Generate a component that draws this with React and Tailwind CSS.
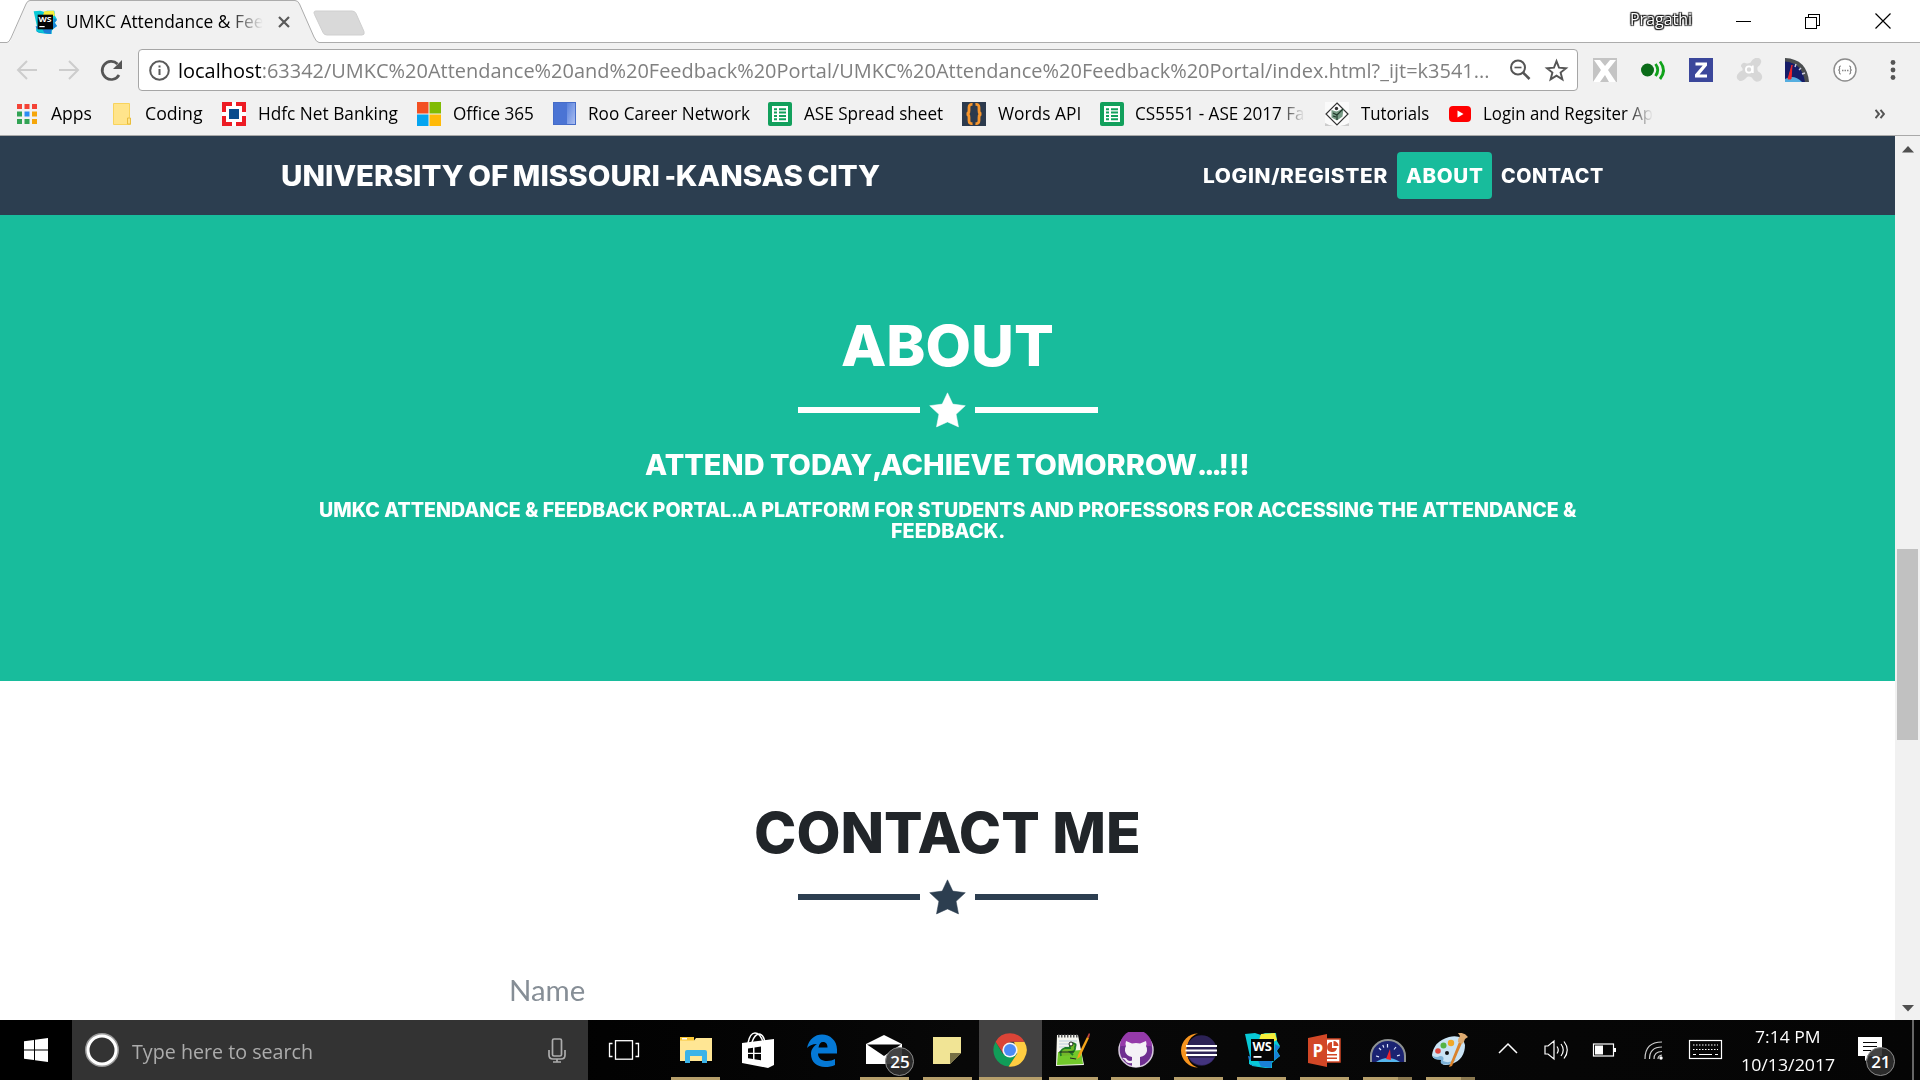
import React, { useLayoutEffect, useRef } from "react";

/* Single line of text stretched horizontally to fill the width of its box. */
function Fit({ className = "", inner = "", children }) {
  const box = useRef(null);
  const text = useRef(null);
  useLayoutEffect(() => {
    const natural = text.current.offsetWidth;
    if (natural) text.current.style.transform = `scaleX(${box.current.clientWidth / natural})`;
  }, []);
  return (
    <span ref={box} className={`flex shrink-0 items-center whitespace-nowrap ${className}`}>
      <span ref={text} className={`block w-max shrink-0 origin-left ${inner}`}>{children}</span>
    </span>
  );
}

function WebStorm({ className }) {
  return (
    <svg viewBox="0 0 36 36" className={className}>
      <path d="M1 2l10-1 6 2 4-2 11 0 1 8 3 5-3 5 3 5-6 5-2 2 0 6-20-3z" fill="#08c9d6" />
      <path d="M17 2l14-1 2 7-4 2-14-2z" fill="#f5ee3a" />
      <path d="M31 12l5 3-4 4 4 5-6 4zM4 24l24 5-1 7-21-3z" fill="#1a7fd6" />
      <path d="M5 28l8-2 4 9-12-3z" fill="#08c9d6" />
      <rect x="7" y="7" width="23" height="22" fill="#050505" />
      <text x="8.4" y="18.6" fontFamily="Open Sans" fontWeight="700" fontSize="11.5" textLength="19.5" lengthAdjust="spacingAndGlyphs" fill="#fff">WS</text>
      <rect x="9.5" y="24" width="8" height="1.8" fill="#fff" />
    </svg>
  );
}

function Sheets() {
  return (
    <svg viewBox="0 0 24 24" className="h-6 w-6">
      <rect width="24" height="24" rx="2" fill="#12a05c" />
      <path d="M4 4h16v16H4z" fill="#fff" />
      <path d="M6 6.2h3v2H6zM11 6.2h7v2h-7zM6 9.6h3v2H6zM11 9.6h7v2h-7zM6 13h3v2H6zM11 13h7v2h-7zM6 16.3h3v2H6zM11 16.3h7v2h-7z" fill="#12a05c" />
    </svg>
  );
}

const gauge = (
  <>
    <path d="M1 24V18a18 17 0 0 1 36 0v6z" fill="#8e9292" />
    <path d="M3 24V18a16 15 0 0 1 32 0v6z" fill="#1b2372" />
    <path d="M7 24q12-8 24 0z" fill="#56b5ec" />
    <path d="M7 18l3 .8M10 10l2 2M18.500 6v3.500M27 9l-2 2.500M31 17l-3 .8M13.800 7l1 2.600" stroke="#dfe6ff" strokeWidth="1.200" />
    <path d="M17 21l4-10 1 11z" fill="#f0252c" />
  </>
);

function TitleBar() {
  return (
    <div className="flex h-[43px] shrink-0 bg-white">
      <div className="relative flex h-[43px] w-[380px]">
        <svg className="absolute left-0 top-0" width="380" height="43" viewBox="0 0 380 43">
          <path d="M8 42.500C11 42 11.500 38 13 35L26 4Q27.500.500 30 .500H295Q298 .500 299.500 4L314 37Q316 42.500 319 42.500V43H8z" fill="#f1f1f1" />
          <path d="M0 42.500H7Q9 42.500 11 38L26 4Q27.500.500 30 .500H295Q298 .500 299.500 4L314 37Q316.500 42.500 319 42.500H380" fill="none" stroke="#acacac" />
          <path d="M316 11h36q3 0 4 2.500l8 18q1 3.500-2 3.500h-35q-3 0-4-2.500l-8.500-18Q313 11 316 11z" fill="#d9d9d9" stroke="#cfcfcf" />
        </svg>
        <div className="relative flex h-[43px] w-full items-center">
          <WebStorm className="ml-[33px] h-6 w-6" />
          <Fit className="ml-[9px] w-[197px] text-[18px] [mask-image:linear-gradient(to_right,black_82%,transparent)]" inner="text-black">UMKC Attendance &amp; Fee</Fit>
          <svg className="ml-[15px]" width="12" height="12" viewBox="0 0 12 12"><path d="M1 1l10 10M11 1L1 11" stroke="#5a5a5a" strokeWidth="2.200" /></svg>
        </div>
      </div>
      <div className="flex flex-1 items-center border-b border-[#acacac]">
        <Fit className="ml-[1250px] -mt-[5px] w-[62px] text-[17px] text-white [text-shadow:0_0_2px_#000,1px_1px_1px_#222,-1px_-1px_1px_#222,1px_-1px_1px_#222,-1px_1px_1px_#222]">Pragathi</Fit>
        <svg className="ml-[44px] -mt-[1px]" width="155" height="18" viewBox="0 0 155 18" fill="none" stroke="#000" shapeRendering="crispEdges">
          <path d="M0 9.500H15" />
          <path d="M69.500 5.500h11v11h-11zM72.500 5V2.500h11v11H81" />
          <path d="M139.500 1.500l15 15M154.500 1.500l-15 15" shapeRendering="auto" strokeWidth="1.200" />
        </svg>
      </div>
    </div>
  );
}

function Toolbar() {
  return (
    <div className="flex h-[49px] shrink-0 items-start pt-[6px]">
      <svg className="mt-[1px]" width="138" height="42" viewBox="0 0 138 42" fill="none">
        <path d="M37 20H18.500M27 11l-9 9 9 9M59 20h19M69 11l9 9-9 9" stroke="#cdcdcd" strokeWidth="2" />
        <path d="M119 25a9 9 0 1 1-1.500-11" stroke="#555" strokeWidth="2.700" />
        <path d="M122 10v9h-9z" fill="#555" />
      </svg>
      <div className="flex h-[42px] w-[1440px] items-center rounded border border-[#a6a6a6] bg-white">
        <svg className="ml-[10px]" width="21" height="21" viewBox="0 0 21 21"><circle cx="10.500" cy="10.500" r="9.300" fill="none" stroke="#5a5a5a" strokeWidth="2" /><path d="M9.500 9h2v6h-2zM9.500 5.500h2v2h-2z" fill="#5a5a5a" /></svg>
        <Fit className="ml-[8px] w-[1311px] text-[20.500px] text-[#808080]"><span className="text-black">localhost</span>:63342/UMKC%20Attendance%20and%20Feedback%20Portal/UMKC%20Attendance%20Feedback%20Portal/index.html?_ijt=k3541...</Fit>
        <svg className="ml-[21px]" width="60" height="24" viewBox="0 0 60 24" fill="none" stroke="#555">
          <circle cx="8" cy="9.500" r="7" strokeWidth="2" /><path d="M4.500 9.500h7" strokeWidth="1.600" /><path d="M13 14.500l6.500 6.500" strokeWidth="2.600" />
          <path d="M46.500 3.200l2.500 6.500 7 .500-5.400 4.400 1.800 6.800-5.900-3.800-5.900 3.800 1.800-6.800L37 10.200l7-.500z" strokeWidth="1.900" />
        </svg>
      </div>
      <svg className="ml-[15px] mt-[9px]" width="312" height="24" viewBox="0 0 312 24">
        <rect width="24" height="24" fill="#c4c4c4" /><path d="M1 2h6l5 6 5-6h6l-8 10 8 12h-7l-4-7-5 7H0l8-12z" fill="#fff" />
        <circle cx="54.500" cy="12" r="6.500" fill="#0a6b18" /><path d="M62.500 6q4.500 6 0 12M67 3.500q7 9 0 17.500" stroke="#0fa31a" strokeWidth="2.800" fill="none" />
        <rect x="96" width="24" height="24" fill="#3b479b" /><path d="M102.500 4.500h11.500v3l-7.500 9H114v3h-12v-3l7.700-9h-7.200z" fill="#fff" />
        <path d="M151 5.500q4 1.500 7-.500 2-4 5.500-4.500 4 0 4 3.500-.500 3-3.500 4.500-1 3 .500 5.500 3.500 1.500 4 5-.500 4-4.500 4-3-.500-4.500-4-4-2-6-.500-4 4.500-7 3.500-3-2-1.500-5 2-3 5-4 1-2-.500-4-2-1.500 1.500-3.500z" fill="#d7d7d7" stroke="#d7d7d7" strokeWidth="1.500" />
        <circle cx="156" cy="11.500" r="3.100" stroke="#fff" strokeWidth="1.800" fill="none" /><path d="M159.800 7.500v7.500" stroke="#fff" strokeWidth="1.800" />
        <path d="M192 0q22 1 24 24h-24z" fill="#4b4e50" /><path d="M192 3.500q17 1 20 20.500h-20z" fill="#161c68" /><path d="M192 21q9-5 17 3h-17z" fill="#55aee0" /><path d="M199 7l-4 14 3 0z" stroke="#f02528" fill="#f02528" /><path d="M203 6l-1 3M208 10l-2 2M212 15l-3 1" stroke="#ccd" strokeWidth="1.400" />
        <circle cx="252" cy="12" r="11" fill="#fff" stroke="#8c8c8c" strokeWidth="1.400" />
        <path d="M248 8q-2 0-1.500 2t-1.500 2q2 0 1.500 2t1.500 2M256 8q2 0 1.500 2t1.500 2q-2 0-1.500 2t-1.500 2" fill="none" stroke="#888" strokeWidth="1.200" /><path d="M249 12.500h1.500M251.500 12.500h1.500M254 12.500h1.500" stroke="#888" strokeWidth="1.400" />
        <g fill="#555"><circle cx="300" cy="4.500" r="2.400" /><circle cx="300" cy="12" r="2.400" /><circle cx="300" cy="19.500" r="2.400" /></g>
      </svg>
    </div>
  );
}

function Bookmarks() {
  const t = "text-[18px]";
  return (
    <div className="flex h-[44px] shrink-0 items-center border-b border-[#a9a9a9] text-black">
      <svg className="ml-[17px]" width="20" height="20" viewBox="0 0 20 20">
        <path d="M0 0h5v5H0zM7.500 0h5v5h-5zM15 0h5v5h-5z" fill="#f44336" /><path d="M0 7.500h5v5H0zM0 15h5v5H0zM7.500 15h5v5h-5z" fill="#31a354" /><path d="M7.500 7.500h5v5h-5z" fill="#2a8cf5" /><path d="M15 7.500h5v5h-5zM15 15h5v5h-5z" fill="#f5a60a" />
      </svg>
      <Fit className={`ml-[14px] w-[41px] ${t}`}>Apps</Fit>
      <svg className="ml-[21px]" width="18" height="22" viewBox="0 0 18 22"><path d="M.500.500h16v14l1 1v6H.500z" fill="#ffe48b" stroke="#f8d35c" /><path d="M14.500 21v-6h3v6z" fill="#ffe48b" stroke="#e8bd3e" /></svg>
      <Fit className={`ml-[14px] w-[58px] ${t}`}>Coding</Fit>
      <svg className="ml-[19px]" width="24" height="24" viewBox="0 0 24 24"><rect width="24" height="24" fill="#ed1c24" /><path d="M4 4h16v16H4zM10 0h4v24h-4zM0 10h24v4H0z" fill="#fff" /><rect x="7" y="7" width="10" height="10" fill="#084c8d" /></svg>
      <Fit className={`ml-[12px] w-[140px] ${t}`}>Hdfc Net Banking</Fit>
      <svg className="ml-[19px]" width="24" height="24" viewBox="0 0 24 24"><path d="M0 0h11.500v11.500H0z" fill="#f35022" /><path d="M12.500 0H24v11.500H12.500z" fill="#80bb03" /><path d="M0 12.500h11.500V24H0z" fill="#05a5f0" /><path d="M12.500 12.500H24V24H12.500z" fill="#ffba08" /></svg>
      <Fit className={`ml-[12px] w-[81px] ${t}`}>Office 365</Fit>
      <div className="ml-[19px] flex h-[23px] w-[23px] justify-end border border-[#456cc8] bg-[#4b74d4]"><div className="h-full w-[8px] bg-linear-to-br from-[#5a82dc] to-[#aabdf0]" /></div>
      <Fit className={`ml-[12px] w-[162px] ${t}`}>Roo Career Network</Fit>
      <div className="ml-[18px]"><Sheets /></div>
      <Fit className={`ml-[12px] w-[139px] ${t}`}>ASE Spread sheet</Fit>
      <svg className="ml-[19px]" width="24" height="24" viewBox="0 0 24 24"><rect width="24" height="24" fill="#2c3a4d" /><path d="M10.500 2.500Q7 2 7 5.500v3Q7 12 4.500 12 7 12 7 15.500v3q0 3.500 3.500 3M13.500 2.500q3.500-.500 3.500 3v3q0 3.500 2.500 3.500Q17 12 17 15.500v3q0 3.500-3.500 3" fill="none" stroke="#f7962d" strokeWidth="2.800" /></svg>
      <Fit className={`ml-[12px] w-[83px] ${t}`}>Words API</Fit>
      <div className="ml-[19px]"><Sheets /></div>
      <Fit className={`ml-[11px] w-[170px] ${t} [mask-image:linear-gradient(to_right,black_84%,transparent)]`}>CS5551 - ASE 2017 Fa</Fit>
      <svg className="ml-[20px]" width="24" height="24" viewBox="0 0 24 24"><rect width="24" height="24" fill="#fafafa" /><path d="M12 1l11 11-11 11L1 12z" fill="#fff" stroke="#333" strokeWidth="1.200" /><path d="M6.500 8l5 1.500 7-3-1 8-5.500 4-5.500-3z" fill="#789c86" /><path d="M8 11l4 2 6-6M12 13v5M8 14l3 1" stroke="#20382b" strokeWidth="1.200" fill="none" /><circle cx="11.500" cy="6.500" r="1.700" fill="#333" /><path d="M0 21q5 3 9 3H0zM24 21q-5 3-9 3h9z" fill="#ccc" /></svg>
      <Fit className={`ml-[12px] w-[68px] ${t}`}>Tutorials</Fit>
      <svg className="ml-[20px]" width="22" height="18" viewBox="0 0 22 18"><rect y="1" width="22" height="16" rx="4" fill="#f00" /><path d="M8.500 5.500l6 3.500-6 3.500z" fill="#fff" /></svg>
      <Fit className={`ml-[12px] w-[170px] ${t} [mask-image:linear-gradient(to_right,black_84%,transparent)]`}>Login and Regsiter Ap</Fit>
      <svg className="ml-[222px]" width="10" height="10" viewBox="0 0 10 10"><path d="M.500.800L4 5 .500 9.200M5.500.800L9 5 5.500 9.200" fill="none" stroke="#555" strokeWidth="2" /></svg>
    </div>
  );
}

function StarDivider({ line, fill }) {
  return (
    <div className="flex h-[60px] items-center justify-center">
      <div className={`h-[6px] w-[122px] ${line}`} />
      <svg className="mx-[9px]" width="37" height="36" viewBox="0 0 37 36"><path d="M18.500.800l5.300 11.300 12.500 1.600-9.200 8.600 2.400 12.600-11-5-11 5 2.400-12.600L.700 13.700l12.500-1.600z" fill={fill} stroke={fill} strokeWidth=".5" strokeLinejoin="round" /></svg>
      <div className={`h-[6px] w-[123px] ${line}`} />
    </div>
  );
}

function Page() {
  return (
    <div className="flex min-h-0 flex-1 bg-white">
      <div className="flex w-[1895px] flex-col overflow-hidden font-['Inter',sans-serif] font-extrabold">
        <nav className="flex h-[79px] shrink-0 items-center bg-[#2c3e50] text-white">
          <Fit className="ml-[281px] w-[599px] pt-[2px] text-[28.500px]" inner="[word-spacing:-2px]">UNIVERSITY OF MISSOURI <span className="-mr-[1px] inline-block w-[12px] origin-left scale-x-80">-</span>KANSAS CITY</Fit>
          <Fit className="ml-[323px] w-[185px] pt-[2px] text-[19.500px]" inner="tracking-[.6px]">LOGIN/REGISTER</Fit>
          <div className="ml-[9px] flex h-[47px] w-[95px] items-center justify-center rounded bg-[#18bc9c]"><Fit className="w-[77px] pt-[2px] text-[19.500px]" inner="tracking-[.6px]">ABOUT</Fit></div>
          <Fit className="ml-[9px] w-[103px] pt-[2px] text-[19.500px]" inner="tracking-[.6px]">CONTACT</Fit>
        </nav>
        <section className="flex h-[466px] shrink-0 flex-col items-center bg-[#18bc9c] pt-[97px] text-white">
          <Fit className="h-[68px] w-[213px] text-[57px]">ABOUT</Fit>
          <StarDivider line="bg-white" fill="#fff" />
          <Fit className="h-[49px] w-[605px] text-[29px]" inner="[word-spacing:-1px]">ATTEND TODAY<span className="tracking-[-2px]">,</span>ACHIEVE TOMORROW<span className="tracking-[-3px]">...</span>!!!</Fit>
          <Fit className="mt-[11px] h-[21px] w-[1257px] text-[19.500px]">UMKC ATTENDANCE &amp; FEEDBACK PORTAL<span className="tracking-[-1.500px]">..</span>A PLATFORM FOR STUDENTS AND PROFESSORS FOR ACCESSING THE ATTENDANCE &amp;</Fit>
          <Fit className="h-[21px] w-[114px] text-[19.500px]">FEEDBACK.</Fit>
        </section>
        <section className="flex flex-col items-center pt-[118px]">
          <Fit className="h-[68px] w-[387px] text-[57px] text-[#212529]">CONTACT ME</Fit>
          <StarDivider line="bg-[#2c3e50]" fill="#2c3e50" />
          <div className="mt-[43px] flex w-[877px]">
            <Fit className="h-[40px] w-[76px] font-['Lato'] text-[29px] font-normal text-[#868e96]">Name</Fit>
          </div>
        </section>
      </div>
      <div className="flex w-[25px] flex-col items-center bg-[#f1f1f1]">
        <svg className="mt-[10px]" width="12" height="7" viewBox="0 0 12 7"><path d="M6 0l6 6.500H0z" fill="#505050" /></svg>
        <div className="mt-[396px] h-[191px] w-[21px] bg-[#c1c1c1]" />
        <svg className="mt-[265px]" width="12" height="7" viewBox="0 0 12 7"><path d="M6 6.500L12 0H0z" fill="#505050" /></svg>
      </div>
    </div>
  );
}

function Task({ open, active, split, children }) {
  return (
    <div className={`flex h-[60px] w-[62.900px] shrink-0 flex-col items-center ${active ? "bg-[#434242]" : ""}`}>
      <div className="flex h-[57px] items-center pt-[3px]">{children}</div>
      {open && (
        <div className={`flex h-[3px] justify-end bg-[#b69f6b] ${active ? "w-full" : "w-[49px]"}`}>
          {split && <div className="h-full w-[14px] bg-[#8a7850]" />}
        </div>
      )}
    </div>
  );
}

function Badge({ children }) {
  return <div className="absolute flex h-[29px] w-[29px] items-center justify-center rounded-full border border-[#8b8b8b] bg-[#303030]/90 text-[17px] font-semibold text-white">{children}</div>;
}

function Taskbar() {
  return (
    <div className="flex h-[60px] shrink-0 items-center bg-[#060606] bg-linear-to-r from-black via-[#080808] to-[#050505] text-white">
      <div className="flex w-[72px] items-center justify-center">
        <svg width="24" height="24" viewBox="0 0 24 24" fill="#fff"><path d="M0 3.300l10-1.400v9.500H0zM11 1.700L24 0v11.400H11zM0 12.500h10v9.600L0 20.700zM11 12.500h13V24l-13-1.800z" /></svg>
      </div>
      <div className="flex h-[60px] w-[516px] items-center bg-[#333333]">
        <svg className="ml-[13px]" width="34" height="34" viewBox="0 0 34 34" fill="none"><circle cx="17" cy="17" r="15.500" stroke="#9b9b9b" strokeWidth="3" /><circle cx="17" cy="17" r="14" stroke="#fff" strokeWidth="3" /></svg>
        <Fit className="ml-[13px] w-[181px] pt-[3px] text-[20px] text-[#acacac]">Type here to search</Fit>
        <svg className="ml-[235px]" width="18" height="25" viewBox="0 0 18 25" fill="none" stroke="#adadad" strokeWidth="1.700"><rect x="4.500" y="1" width="9" height="17" rx="1.500" /><path d="M1 12v5q0 4 4 4h8q4 0 4-4v-5M9 21v3M5 24h8" /></svg>
      </div>
      <svg className="ml-[20px]" width="32" height="20" viewBox="0 0 32 20" fill="none" stroke="#fff" strokeWidth="1.300"><rect x="7.500" y=".700" width="17" height="18.500" /><path d="M4.500 3.500H1.500v13h3M27.500 3.500h3v13h-3" /></svg>
      <div className="ml-[24.300px] flex h-[60px]">
        <Task open>
          <svg width="32" height="28" viewBox="0 0 32 28"><path d="M0 1h14v5H0z" fill="#f8c636" /><path d="M2 2h5v1.500H2z" fill="#fff" /><path d="M0 4.500h14L16 2h16v23H0z" fill="#ffe694" /><path d="M5 27V16q0-2 2-2h18q2 0 2 2v11h-5v-7H10v7z" fill="#3bb3e8" /></svg>
        </Task>
        <Task>
          <svg width="33" height="36" viewBox="0 0 33 36"><path d="M6 11Q8 1 13 1q5 0 8 9M10 10q3-8 7-8 4 0 6 8" stroke="#fff" strokeWidth="1.500" fill="none" /><path d="M0 11l32-4v26l-6 3-26-5z" fill="#fff" /><path d="M6 16.500l5-.700v5H6zM12.500 15.600l6.500-1v6.200h-6.500zM6 22h5v5l-5-.700zM12.500 22H19v6.200l-6.500-1z" fill="#050505" /></svg>
        </Task>
        <Task>
          <svg width="32" height="33" viewBox="0 0 32 33"><path d="M1 14C3 5 9 .500 16 .500c8 0 15 6 15 15v4H12c0 5 4 7.500 9 7.500 3 0 6-1 8-2v6c-3 1.500-6 2-10 2C11 33 5 28 5 20c0-5 3-8 6-10-5 0-8 2-10 4zm11.500-.500h9c0-4-2-5.500-4.500-5.500s-4 2-4.500 5.500z" fill="#0579d6" /></svg>
        </Task>
        <Task open>
          <div className="relative h-[30px] w-[36px]">
            <svg width="36" height="30" viewBox="0 0 36 30"><path d="M0 9L18 0l18 9v20H0z" fill="#fff" /><path d="M1 9.500h34L18 21z" fill="#060606" /></svg>
            <div className="absolute left-[19px] top-[12px]"><Badge>25</Badge></div>
          </div>
        </Task>
        <Task open>
          <svg width="28" height="27" viewBox="0 0 28 27"><path d="M0 0h28v16L17 27H0z" fill="#f1e495" /><path d="M17 27V16h11z" fill="#766f45" /></svg>
        </Task>
        <Task open active>
          <svg width="34" height="34" viewBox="0 0 34 34"><path d="M2.600 8.700a16.600 16.600 0 0 0 13 24.900L24 21 17 17 9.800 21z" fill="#119d58" /><path d="M31.400 8.700A16.600 16.600 0 0 1 15.600 33.600L24.200 20.500 21 8.700z" fill="#ffcd41" /><path d="M2.600 8.700A16.600 16.600 0 0 1 31.400 8.700H17L10 20z" fill="#db4437" /><circle cx="17" cy="17" r="7.600" fill="#f5f5f5" /><circle cx="17" cy="17" r="6" fill="#4c8bf5" /></svg>
        </Task>
        <Task open>
          <svg width="34" height="34" viewBox="0 0 34 34"><path d="M1 2h21l6 30-28 1z" fill="#f4f5ee" /><path d="M2 19l23-2 2 14-26 1z" fill="#72c92b" /><path d="M3 8h18M3 11h18M3 14h18" stroke="#bcd" /><path d="M5 23q-2-6 4-8l5 0q-1-5 3-5 4 1 2 4 1 5-5 5l3 3" stroke="#1e7d25" strokeWidth="1.800" fill="#71b82a" /><circle cx="15" cy="11" r="2" fill="#fff" stroke="#222" /><path d="M3 19h15M14 25l6 1" stroke="#222" /><path d="M2 3h20" stroke="#555" strokeWidth="3" strokeDasharray="1.500 1.500" /><path d="M22 22L31 4l2 1-9 19-3 2z" fill="#f4a51a" /><path d="M31 4l2-4 1 1-1 4z" fill="#c2413c" /></svg>
        </Task>
        <Task open>
          <svg width="36" height="36" viewBox="0 0 36 36"><circle cx="18" cy="18" r="17" fill="#6f2f91" stroke="#d6c9dd" strokeWidth="1.500" /><path d="M2 14a16 16 0 0 1 32 0z" fill="#953aaa" /><path d="M8 9l6 2.500q4-1 8 0L28 9q1 3 0 5 1.500 2 1 5-1 5-7 6v9.500q-4 1-8 0V31q-5 1-7-3l-3-2q4-1 5.500 2 2 1.500 4.500.500V25q-6-1-7-6-.500-3 1-5-1-2 0-5z" fill="#f4f1f6" /></svg>
        </Task>
        <Task open>
          <svg width="36" height="35" viewBox="0 0 36 35"><path d="M17 .500A17 17 0 0 0 17 34.500Q6 31 6 17.500T17 .500z" fill="#f7941e" /><circle cx="20.500" cy="17.500" r="15.200" fill="#2c2255" /><path d="M8 25h25q-4 7-12 7T8 25z" fill="#43347e" /><path d="M5 13h31M4.500 17.500H36M5 22h31" stroke="#fff" strokeWidth="2" /></svg>
        </Task>
        <Task open><WebStorm className="h-[36px] w-[36px]" /></Task>
        <Task open>
          <svg width="33" height="33" viewBox="0 0 33 33"><rect x="17" y="5" width="15" height="23" fill="#fff" stroke="#d24726" strokeWidth="1.500" /><path d="M24 8a5 5 0 1 0 5 6h-5zM25.500 7v5h5a5 5 0 0 0-5-5zM18 20h11v1.500H18zM18 23.500h11V25H18z" fill="#d24726" /><path d="M0 4l19-4v33L0 29z" fill="#d24726" /><text x="4.500" y="22.500" fontFamily="Open Sans" fontWeight="700" fontSize="17" fill="#fff">P</text></svg>
        </Task>
        <Task open split><svg width="38" height="25" viewBox="0 0 38 25">{gauge}</svg></Task>
        <Task open split>
          <svg width="37" height="35" viewBox="0 0 37 35"><path d="M0 22Q2 8 17 4q14-3 16 8 0 14-13 19-12 3-10-3 1-4-4-3-5 2-6-3z" fill="#c9e3f4" /><path d="M1 23q4 2 7 0 5 0 3 5 6 3 14-2-7 7-15 5-2-1-1-4-8 0-8-4z" fill="#7db2d8" /><circle cx="6" cy="18" r="2.800" fill="#e0483e" /><circle cx="11.500" cy="12.500" r="3" fill="#55b443" /><circle cx="19" cy="10" r="3.200" fill="#f0a828" /><circle cx="15" cy="20" r="2" fill="#111" /><path d="M17 34L27 9l3 1-10 23z" fill="#d9822b" /><path d="M26 9q0-4 2-6l-2-3q6-1 10 4l-3 2q-1 4-3 5z" fill="#dcaa70" /></svg>
        </Task>
      </div>
      <svg className="ml-[15.500px]" width="234" height="30" viewBox="0 0 234 30" fill="none" stroke="#fff" strokeWidth="1.200">
        <path d="M2 18l9-9 9 9" strokeWidth="1.500" />
        <path d="M48 11v8h3l6 5V6l-6 5zM60 11.500q2.500 3.500 0 7M64 9q4.500 6 0 12M67 6.500q6.500 8.500 0 17" />
        <rect x="96.500" y="9" width="20" height="12" /><path d="M98 10.500h8v9h-8z" fill="#fff" stroke="none" /><path d="M118 13v4" strokeWidth="2" />
        <path d="M148 24Q148 7 165 7M152.500 24Q152.500 12 165 12M157 24Q157 16.500 165 16.500M161 24q0-3.500 4-4" stroke="#cfcfcf" /><circle cx="164" cy="23" r="1.700" fill="#fff" stroke="none" />
        <rect x="192.500" y="5.500" width="32" height="18" /><path d="M196 10h25M196 14.500h25" strokeDasharray="1.500 1.500" /><path d="M196 19.500h3M202 19.500h13M218 19.500h3" />
      </svg>
      <div className="ml-[9px] flex w-[95px] flex-col items-center pt-[1px] text-[17px] leading-[28px]">
        <Fit className="h-[28px] w-[66px]">7:14 PM</Fit>
        <Fit className="h-[28px] w-[94px]">10/13/2017</Fit>
      </div>
      <div className="relative ml-[23px] h-[26px] w-[24px]">
        <svg width="24" height="26" viewBox="0 0 24 26"><path d="M0 0h24v19H12l-5 5v-5H0z" fill="#fff" /><path d="M5 5.500h14M5 9.500h14M5 13.500h8" stroke="#060606" strokeWidth="1.200" /></svg>
        <div className="absolute left-[8px] top-[10px]"><Badge>21</Badge></div>
      </div>
      <div className="ml-auto mr-[6px] h-[60px] w-[2px] bg-[#666]" />
    </div>
  );
}

export default function App() {
  return (
    <div className="flex h-[1080px] w-[1920px] flex-col overflow-hidden bg-[#f1f1f1] font-['Open_Sans',sans-serif]">
      <TitleBar />
      <Toolbar />
      <Bookmarks />
      <Page />
      <Taskbar />
    </div>
  );
}
